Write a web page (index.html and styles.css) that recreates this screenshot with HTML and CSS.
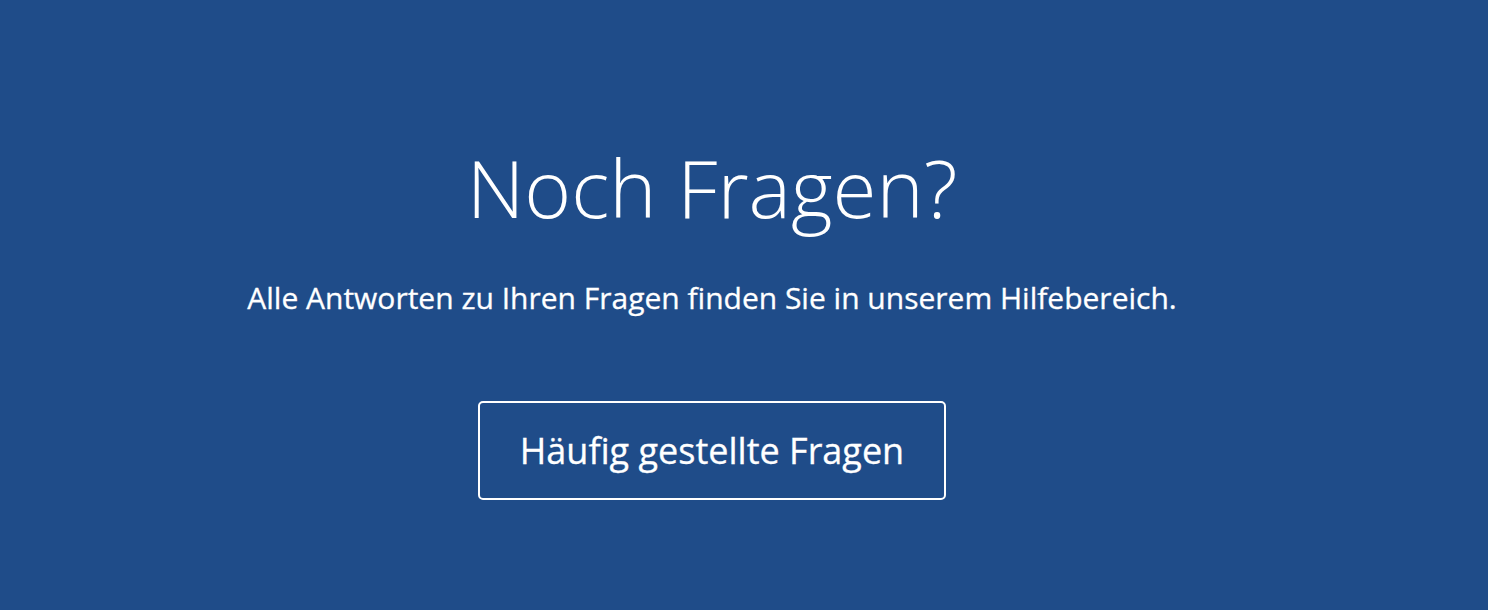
FILE: index.html
```html
<!DOCTYPE html>
<html lang="de">
<head>
<meta charset="utf-8">
<title>Noch Fragen?</title>
<link rel="stylesheet" href="styles.css">
</head>
<body>
<section class="help">
  <div class="help__inner">
    <h2 class="help__title">Noch Fragen?</h2>
    <p class="help__lead">Alle Antworten zu Ihren Fragen finden Sie in unserem Hilfebereich.</p>
    <a class="help__button" href="#">Häufig gestellte Fragen</a>
  </div>
</section>
</body>
</html>
```

FILE: styles.css
```css
html, body {
  margin: 0;
  padding: 0;
}

body {
  background: #1f4c89;
  font-family: "Open Sans", "Liberation Sans", sans-serif;
  color: #fff;
}

.help {
  height: 610px;
  padding-right: 64px;
  box-sizing: border-box;
}

.help__inner {
  display: flex;
  flex-direction: column;
  align-items: center;
  padding-top: 132px;
}

.help__title {
  margin: 0;
  font-size: 80px;
  font-weight: 300;
  line-height: 110px;
}

.help__lead {
  margin: 36px 0 0;
  font-size: 30px;
  font-weight: 400;
  line-height: 40px;
  -webkit-text-stroke: 0.3px #fff;
}

.help__button {
  margin-top: 83px;
  width: 468px;
  height: 99px;
  box-sizing: border-box;
  display: flex;
  align-items: center;
  justify-content: center;
  border: 2px solid #fff;
  border-radius: 5px;
  color: #fff;
  text-decoration: none;
  font-size: 36px;
  font-weight: 400;
  -webkit-text-stroke: 0.3px #fff;
}
```
